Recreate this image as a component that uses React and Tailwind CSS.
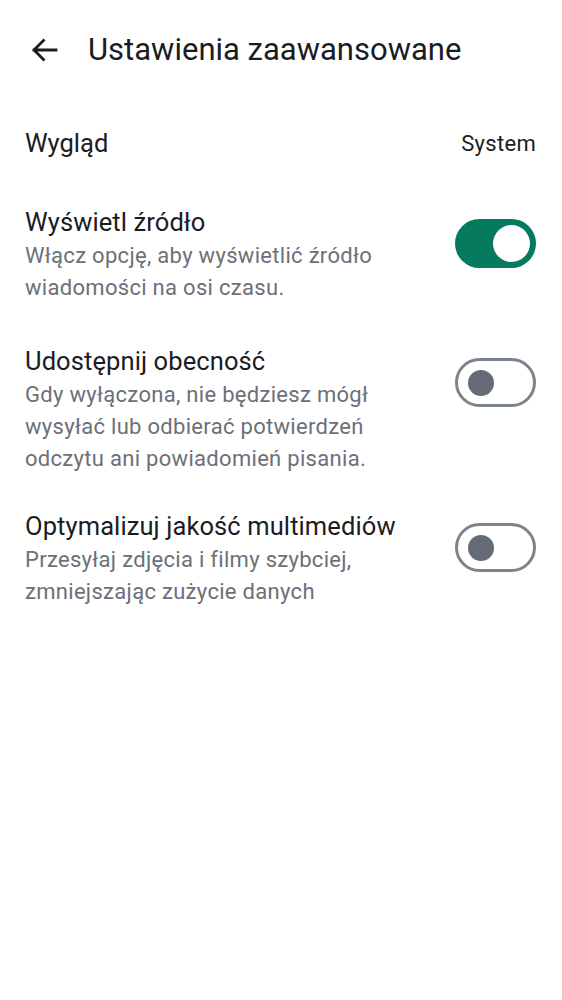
import React from "react";

function Toggle({ on }) {
  if (on) {
    return (
      <div className="mt-[13px] flex h-[49px] w-[81px] shrink-0 items-center justify-end rounded-full bg-[#057a5e] pr-[6px]">
        <div className="h-[37px] w-[37px] rounded-full bg-white" />
      </div>
    );
  }
  return (
    <div className="mt-[13px] flex h-[49px] w-[81px] shrink-0 items-center rounded-full border-[3px] border-[#7b838d] bg-white pl-[10px]">
      <div className="h-[26px] w-[26px] rounded-full bg-[#646b75]" />
    </div>
  );
}

function Item({ title, lines, on, className }) {
  return (
    <div className={"flex items-start justify-between " + (className || "")}>
      <div className="flex flex-col">
        <div className="whitespace-nowrap text-[25.5px] leading-[32px] tracking-[0.1px] text-[#1b1c1f]">{title}</div>
        <div className="mt-[2px] text-[22px] leading-[32px] tracking-[0.3px] text-[#6b7079]">
          {lines.map((l, i) => (
            <div key={i} className="whitespace-nowrap">{l}</div>
          ))}
        </div>
      </div>
      <Toggle on={on} />
    </div>
  );
}

export default function App() {
  return (
    <div
      className="min-h-[1000px] w-full bg-white"
      style={{ fontFamily: "Roboto, 'Noto Sans', sans-serif" }}
    >
      <div className="flex h-[100px] items-center pl-[30px]">
        <svg width="28" height="28" viewBox="0 0 28 28" fill="none" className="shrink-0">
          <path d="M26 14H4M13.5 4.5L4 14l9.5 9.5" stroke="#1b1c1f" strokeWidth="2.8" strokeLinecap="square" />
        </svg>
        <div className="ml-[30px] whitespace-nowrap text-[31px] font-normal text-[#1b1c1f]">Ustawienia zaawansowane</div>
      </div>
      <div className="flex flex-col pl-[25px] pr-[26px]">
        <div className="mt-[27px] flex h-[32px] items-center justify-between">
          <div className="text-[25.5px] text-[#1b1c1f]">Wygląd</div>
          <div className="text-[22px] tracking-[0.3px] text-[#1b1c1f]">System</div>
        </div>
        <div className="mt-[47px] flex flex-col">
          <Item
            title="Wyświetl źródło"
            lines={["Włącz opcję, aby wyświetlić źródło", "wiadomości na osi czasu."]}
            on
          />
          <Item
            className="mt-[41px]"
            title="Udostępnij obecność"
            lines={["Gdy wyłączona, nie będziesz mógł", "wysyłać lub odbierać potwierdzeń", "odczytu ani powiadomień pisania."]}
          />
          <Item
            className="mt-[35px]"
            title="Optymalizuj jakość multimediów"
            lines={["Przesyłaj zdjęcia i filmy szybciej,", "zmniejszając zużycie danych"]}
          />
        </div>
      </div>
    </div>
  );
}
